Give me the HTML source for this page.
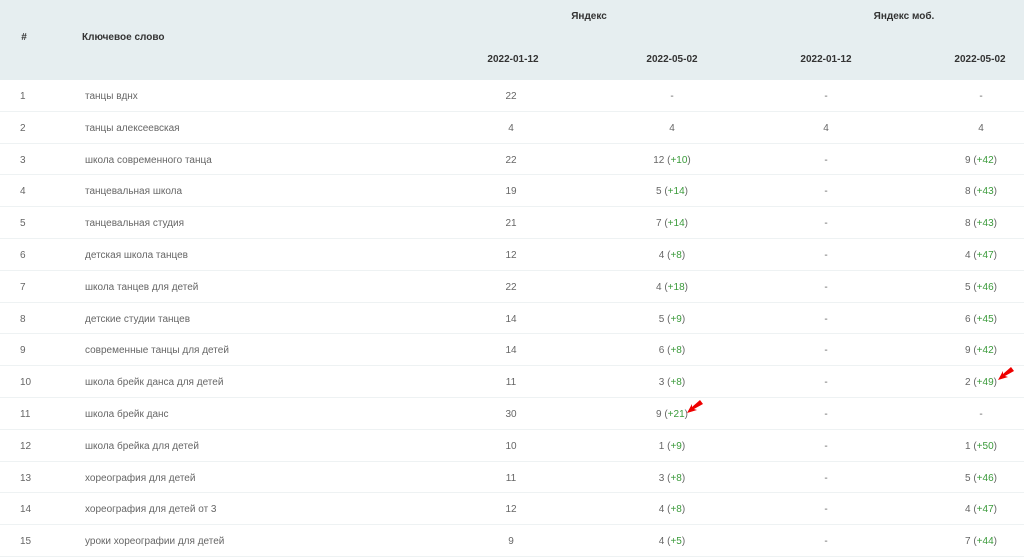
<!DOCTYPE html>
<html><head><meta charset="utf-8"><style>
body{margin:0;width:1024px;height:558px;overflow:hidden;background:#fff;font-family:"Liberation Sans","DejaVu Sans",sans-serif;font-size:10px;color:#666;position:relative}
.hd{position:absolute;left:0;top:0;width:1024px;height:80px;background:#e6eef0}
.h{position:absolute;font-weight:bold;color:#333;font-size:10px;transform:translateX(-50%);white-space:nowrap}
.row{position:absolute;left:0;width:1024px;height:31.8px;border-bottom:1px solid #eef2f3;box-sizing:border-box}
.c{position:absolute;top:11px;white-space:nowrap;transform:translateX(-50%)}
.l{position:absolute;top:11px;white-space:nowrap}
.g{color:#3a9a3a}
</style></head><body>
<div class="hd"></div>
<div class="h" style="left:24px;top:32px">#</div>
<div class="h" style="left:82px;top:32px;transform:none">Ключевое слово</div>
<div class="h" style="left:589px;top:11px">Яндекс</div>
<div class="h" style="left:904px;top:11px">Яндекс моб.</div>
<div class="h" style="left:513px;top:54px">2022-01-12</div>
<div class="h" style="left:672px;top:54px">2022-05-02</div>
<div class="h" style="left:826px;top:54px">2022-01-12</div>
<div class="h" style="left:980px;top:54px">2022-05-02</div>
<div id="rows"></div>
<script>
var d=[["танцы вднх","22","-","-","-"],["танцы алексеевская","4","4","4","4"],["школа современного танца","22","12|+10","-","9|+42"],["танцевальная школа","19","5|+14","-","8|+43"],["танцевальная студия","21","7|+14","-","8|+43"],["детская школа танцев","12","4|+8","-","4|+47"],["школа танцев для детей","22","4|+18","-","5|+46"],["детские студии танцев","14","5|+9","-","6|+45"],["современные танцы для детей","14","6|+8","-","9|+42"],["школа брейк данса для детей","11","3|+8","-","2|+49"],["школа брейк данс","30","9|+21","-","-"],["школа брейка для детей","10","1|+9","-","1|+50"],["хореография для детей","11","3|+8","-","5|+46"],["хореография для детей от 3","12","4|+8","-","4|+47"],["уроки хореографии для детей","9","4|+5","-","7|+44"]];
function f(s){var p=s.split("|");return p.length>1?p[0]+' (<span class="g">'+p[1]+'</span>)':s}
var h="",xs=[511,672,826,981];
d.forEach(function(r,i){h+='<div class="row" style="top:'+(80+i*31.8)+'px"><div class="l" style="left:20px">'+(i+1)+'</div><div class="l" style="left:85px">'+r[0]+'</div>';
for(var j=1;j<5;j++)h+='<div class="c" style="left:'+xs[j-1]+'px">'+f(r[j])+'</div>';h+='</div>'});
document.getElementById("rows").innerHTML=h;
</script>
<svg style="position:absolute;left:0;top:0" width="1024" height="558">
<polygon points="998,380 1003,371 1003,374 1011,367 1014,371 1005,376 1008,377" fill="#e00"/>
<polygon points="687,413 692,404 692,407 700,400 703,404 694,409 697,410" fill="#e00"/>
</svg>
</body></html>
